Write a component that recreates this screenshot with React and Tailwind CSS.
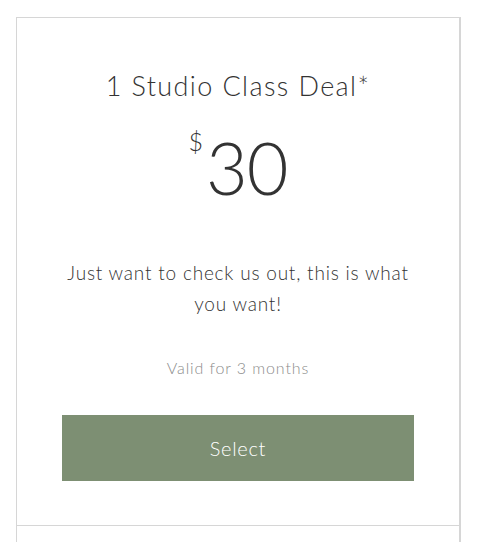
export default function App() {
  return (
    <div className="w-[484px] h-[542px] bg-white overflow-hidden" style={{ fontFamily: "Lato, 'Open Sans', sans-serif" }}>
      <div className="ml-4 mt-[17px] w-[445px] border-t border-l border-r-2 border-[#d6d6d6]">
        <div className="flex flex-col items-center h-[508px] border-b border-[#d6d6d6]">
          <div className="mt-[48px] h-[38px] flex items-center text-[27px] font-light text-[#333333] leading-none tracking-[1.4px]">
            1 Studio Class Deal*
          </div>
          <div className="mt-[33px] flex items-start text-[#333333]">
            <span className="text-[25px] font-light leading-none mt-[-8px] mr-[3px]">$</span>
            <span className="text-[72px] font-light leading-[60px] tracking-[-1px]">30</span>
          </div>
          <div className="mt-[60px] w-[360px] text-center text-[19px] font-light text-[#333333] leading-[31px] tracking-[0.8px]">
            Just want to check us out, this is what you want!
          </div>
          <div className="mt-[39px] text-[16px] font-light text-[#8c8c8c] leading-[20px] tracking-[0.9px]">
            Valid for 3 months
          </div>
          <button className="mt-[37px] w-[352px] h-[66px] bg-[#7d8f73] text-white text-[20px] font-light tracking-[0.7px] flex items-center justify-center">
            Select
          </button>
        </div>
        <div className="h-[20px]"></div>
      </div>
    </div>
  );
}
